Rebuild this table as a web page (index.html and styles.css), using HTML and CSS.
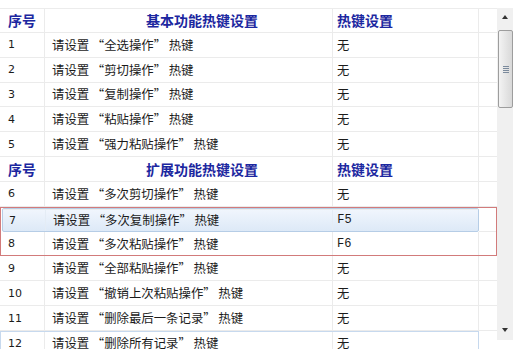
FILE: index.html
```html
<!DOCTYPE html>
<html lang="zh-CN">
<head>
<meta charset="utf-8">
<link rel="stylesheet" href="styles.css">
</head>
<body>
<div class="win">
  <div class="table">
    <div class="row head">
      <div class="cells"><div class="c num">序号</div><div class="c name">基本功能热键设置</div><div class="c key">热键设置</div></div><div class="pad"></div>
    </div>
    <div class="row"><div class="cells"><div class="c num">1</div><div class="c name">请设置<span class="ql">“</span>全选操作<span class="qr">”</span>热键</div><div class="c key">无</div></div><div class="pad"></div></div>
    <div class="row"><div class="cells"><div class="c num">2</div><div class="c name">请设置<span class="ql">“</span>剪切操作<span class="qr">”</span>热键</div><div class="c key">无</div></div><div class="pad"></div></div>
    <div class="row"><div class="cells"><div class="c num">3</div><div class="c name">请设置<span class="ql">“</span>复制操作<span class="qr">”</span>热键</div><div class="c key">无</div></div><div class="pad"></div></div>
    <div class="row"><div class="cells"><div class="c num">4</div><div class="c name">请设置<span class="ql">“</span>粘贴操作<span class="qr">”</span>热键</div><div class="c key">无</div></div><div class="pad"></div></div>
    <div class="row"><div class="cells"><div class="c num">5</div><div class="c name">请设置<span class="ql">“</span>强力粘贴操作<span class="qr">”</span>热键</div><div class="c key">无</div></div><div class="pad"></div></div>
    <div class="row head">
      <div class="cells"><div class="c num">序号</div><div class="c name">扩展功能热键设置</div><div class="c key">热键设置</div></div><div class="pad"></div>
    </div>
    <div class="row"><div class="cells"><div class="c num">6</div><div class="c name">请设置<span class="ql">“</span>多次剪切操作<span class="qr">”</span>热键</div><div class="c key">无</div></div><div class="pad"></div></div>
    <div class="group">
      <div class="row"><div class="cells sel"><div class="c num">7</div><div class="c name">请设置<span class="ql">“</span>多次复制操作<span class="qr">”</span>热键</div><div class="c key fk">F5</div></div><div class="pad"></div></div>
      <div class="row"><div class="cells"><div class="c num">8</div><div class="c name">请设置<span class="ql">“</span>多次粘贴操作<span class="qr">”</span>热键</div><div class="c key fk">F6</div></div><div class="pad"></div></div>
    </div>
    <div class="row"><div class="cells"><div class="c num">9</div><div class="c name">请设置<span class="ql">“</span>全部粘贴操作<span class="qr">”</span>热键</div><div class="c key">无</div></div><div class="pad"></div></div>
    <div class="row"><div class="cells"><div class="c num">10</div><div class="c name">请设置<span class="ql">“</span>撤销上次粘贴操作<span class="qr">”</span>热键</div><div class="c key">无</div></div><div class="pad"></div></div>
    <div class="row"><div class="cells"><div class="c num">11</div><div class="c name">请设置<span class="ql">“</span>删除最后一条记录<span class="qr">”</span>热键</div><div class="c key">无</div></div><div class="pad"></div></div>
    <div class="row"><div class="cells focus"><div class="c num">12</div><div class="c name">请设置<span class="ql">“</span>删除所有记录<span class="qr">”</span>热键</div><div class="c key">无</div></div><div class="pad"></div></div>
  </div>
  <div class="scroll">
    <div class="arrow up"></div>
    <div class="thumb"><div class="grip"><i></i><i></i><i></i><i></i></div></div>
    <div class="track"></div>
    <div class="arrow down"></div>
  </div>
</div>
</body>
</html>
```
FILE: styles.css
```css
* { box-sizing: border-box; margin: 0; padding: 0; }
html, body { background: #fff; }
body { width: 513px; height: 349px; overflow: hidden; font-family: "Noto Sans CJK SC", sans-serif; color: #1b1b1b; }
.win { display: flex; width: 513px; height: 349px; overflow: hidden; }
.table { width: 497px; padding-top: 8px; flex: none; }
.row { display: flex; height: 24.85px; }
.row:first-child .c, .row:first-child .pad { border-top: 1px solid #ececec; }
.cells { display: flex; width: 479px; }
.c { border-right: 1px solid #ebebeb; border-bottom: 1px solid #ebebeb; display: flex; align-items: center; font-size: 12px; white-space: nowrap; overflow: hidden; }
.pad { width: 18px; border-bottom: 1px solid #ebebeb; }
.num { width: 45px; padding-left: 8px; font-family: "DejaVu Sans", sans-serif; font-size: 11px; }
.name { width: 288px; padding-left: 7px; font-size: 12.4px; }
.ql, .qr { display: inline-block; width: 15px; }
.ql { text-align: right; }
.qr { text-align: left; }
.key { width: 146px; padding-left: 4px; font-size: 12.3px; }
.fk { font-family: "Liberation Mono", monospace; font-size: 12px; }
.head .c { color: #1c27a0; font-weight: bold; font-size: 14px; font-family: "Noto Sans CJK SC", sans-serif; }
.head .num { padding-left: 8px; }
.head .name { padding-left: 101px; }
.head .key { padding-left: 4px; }
.group { outline: 1px solid #d27b7b; outline-offset: -1px; }
.sel { background: linear-gradient(#f1f6fd, #dde9f7); border: 1px solid #b6cde6; border-radius: 2px; margin: 1px 0 0 2px; width: 477px; }
.sel .c { border-bottom: none; border-right-color: #e4ecf5; }
.sel .num { width: 43px; padding-left: 6px; }
.sel .key { width: 145px; border-right: none; }
.focus { border: 1px solid #c7d9ee; border-bottom: none; }
.focus .num { width: 44px; padding-left: 7px; }
.focus .key { width: 144px; border-right: none; }
.scroll { width: 16px; margin-top: 8px; height: 332px; background: #f0f0f0; display: flex; flex-direction: column; align-items: center; }
.arrow { width: 16px; height: 17px; display: flex; align-items: center; justify-content: center; }
.arrow::after { content: ""; border-left: 3px solid transparent; border-right: 3px solid transparent; }
.up::after { border-bottom: 4px solid #333; }
.down::after { border-top: 4px solid #333; }
.thumb { width: 15px; height: 78px; margin-left: 1px; margin-top: 5px; border: 1px solid #9d9d9d; border-radius: 2px; background: linear-gradient(90deg, #f3f3f3, #e3e3e3 60%, #d9d9d9); display: flex; align-items: center; justify-content: center; }
.grip { display: flex; flex-direction: column; gap: 1px; }
.grip i { display: block; width: 6px; height: 1px; background: #7b8a9c; }
.track { flex: 1; }
.down { margin-bottom: 2px; }
```
